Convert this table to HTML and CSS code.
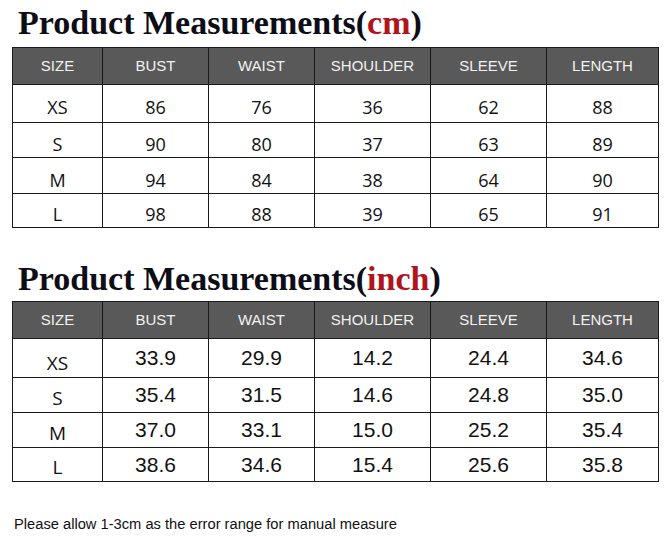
FILE: index.html
```html
<!DOCTYPE html>
<html>
<head>
<meta charset="utf-8">
<link rel="stylesheet" href="styles.css">
</head>
<body>
<div class="page">
  <h1 class="title">Product <span class="cap">M</span>easurements(<span class="unit">cm</span>)</h1>
  <table class="chart chart-cm">
    <colgroup>
      <col class="c1"><col class="c2"><col class="c3"><col class="c4"><col class="c5"><col class="c6">
    </colgroup>
    <thead>
      <tr class="head"><th>SIZE</th><th>BUST</th><th>WAIST</th><th>SHOULDER</th><th>SLEEVE</th><th>LENGTH</th></tr>
    </thead>
    <tbody>
      <tr class="row r1"><td>XS</td><td>86</td><td>76</td><td>36</td><td>62</td><td>88</td></tr>
      <tr class="row r2"><td>S</td><td>90</td><td>80</td><td>37</td><td>63</td><td>89</td></tr>
      <tr class="row r3"><td>M</td><td>94</td><td>84</td><td>38</td><td>64</td><td>90</td></tr>
      <tr class="row r4"><td>L</td><td>98</td><td>88</td><td>39</td><td>65</td><td>91</td></tr>
    </tbody>
  </table>

  <h1 class="title title-inch">Product <span class="cap">M</span>easurements(<span class="unit">inch</span>)</h1>
  <table class="chart chart-inch">
    <colgroup>
      <col class="c1"><col class="c2"><col class="c3"><col class="c4"><col class="c5"><col class="c6">
    </colgroup>
    <thead>
      <tr class="head"><th>SIZE</th><th>BUST</th><th>WAIST</th><th>SHOULDER</th><th>SLEEVE</th><th>LENGTH</th></tr>
    </thead>
    <tbody>
      <tr class="row r1"><td class="size">XS</td><td>33.9</td><td>29.9</td><td>14.2</td><td>24.4</td><td>34.6</td></tr>
      <tr class="row r2"><td class="size">S</td><td>35.4</td><td>31.5</td><td>14.6</td><td>24.8</td><td>35.0</td></tr>
      <tr class="row r3"><td class="size">M</td><td>37.0</td><td>33.1</td><td>15.0</td><td>25.2</td><td>35.4</td></tr>
      <tr class="row r4"><td class="size">L</td><td>38.6</td><td>34.6</td><td>15.4</td><td>25.6</td><td>35.8</td></tr>
    </tbody>
  </table>

  <p class="note">Please allow 1-3cm as the error range for manual measure</p>
</div>
</body>
</html>
```
FILE: styles.css
```css
html, body {
  margin: 0;
  padding: 0;
  background: #ffffff;
}

.page {
  width: 664px;
  height: 537px;
  overflow: hidden;
  padding-left: 12px;
  box-sizing: border-box;
}

.title {
  margin: 0;
  padding: 6px 0 0 6px;
  height: 47px;
  box-sizing: border-box;
  font-family: "Liberation Serif", "Times New Roman", serif;
  font-weight: bold;
  font-size: 34px;
  line-height: 34px;
  color: #0d0d18;
  white-space: nowrap;
}

.title-inch {
  height: 73px;
  padding-top: 34px;
}

.title .unit {
  color: #b0141c;
}

.chart {
  border-collapse: collapse;
  table-layout: fixed;
  width: 646px;
}

.c1 { width: 90px; }
.c2 { width: 106px; }
.c3 { width: 106px; }
.c4 { width: 116px; }
.c5 { width: 116px; }
.c6 { width: 112px; }

.chart th,
.chart td {
  border: 1px solid #1a1a1a;
  text-align: center;
  padding: 0;
  box-sizing: border-box;
}

.head {
  height: 37px;
}

.head th {
  background: #595959;
  color: #f2f2f2;
  font-family: "Liberation Sans", Arial, sans-serif;
  font-weight: normal;
  font-size: 15px;
  line-height: 18px;
  vertical-align: middle;
}

.chart-cm .r1 { height: 38px; }
.chart-cm .r2 { height: 35px; }
.chart-cm .r3 { height: 36px; }
.chart-cm .r4 { height: 34px; }

.chart-inch .r1 { height: 39px; }
.chart-inch .r2 { height: 35px; }
.chart-inch .r3 { height: 35px; }
.chart-inch .r4 { height: 34px; }

.row td {
  color: #111111;
}

.chart-cm .row td {
  font-family: "Open Sans", sans-serif;
  font-size: 18px;
  line-height: 24px;
  vertical-align: bottom;
  padding-bottom: 1px;
}

.chart-cm .r1 td {
  padding-bottom: 3px;
}

.chart-inch .row td {
  font-family: "Liberation Sans", Arial, sans-serif;
  font-size: 21px;
  line-height: 24px;
  vertical-align: middle;
}

.chart-inch .row td.size {
  font-family: "Open Sans", sans-serif;
  font-size: 19px;
  vertical-align: bottom;
  padding-bottom: 2px;
}

.note {
  margin: 34px 0 0 2px;
  font-family: "Liberation Sans", Arial, sans-serif;
  font-size: 14.7px;
  line-height: 16px;
  color: #111111;
}
```
